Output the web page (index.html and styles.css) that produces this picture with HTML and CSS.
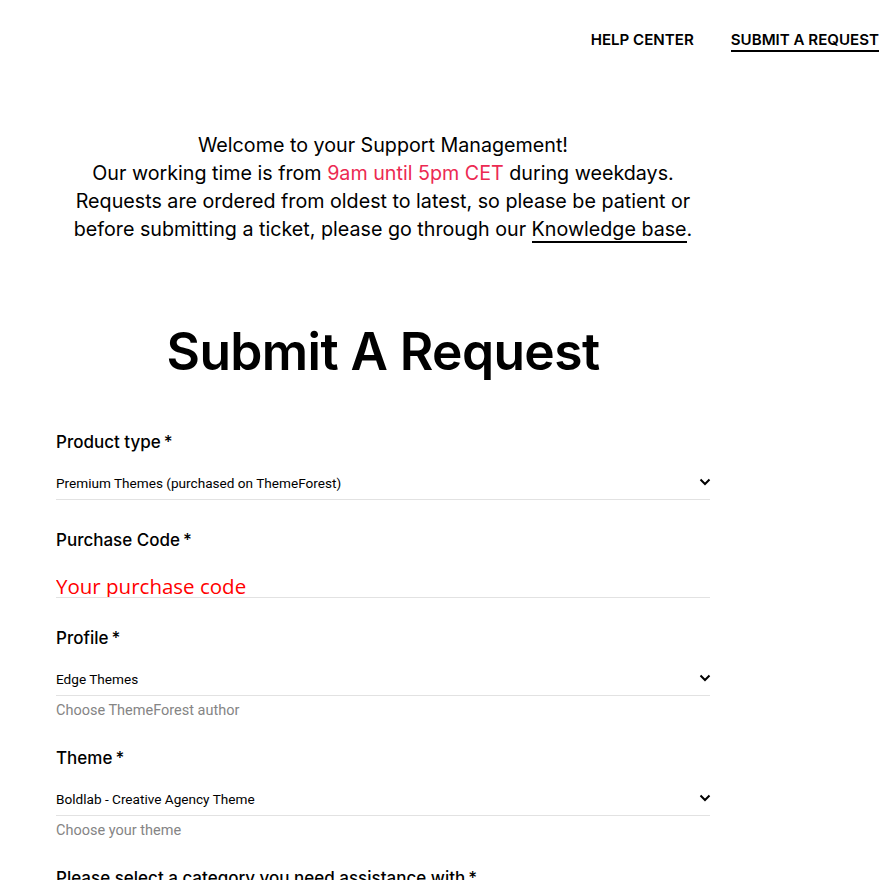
FILE: index.html
```html
<!DOCTYPE html>
<html>
    <head>
        <meta name="viewport" content="width=device-width">
        <title>Submit A Request</title>
        <link rel="stylesheet" href="styles.css">
    </head>
    <body>
        <div class="nav">
            <a class="nav-link" href="#">HELP CENTER</a>
            <a class="nav-link active" href="#">SUBMIT A REQUEST</a>
        </div>
        <div class="main">
            <div class="intro">
                Welcome to your Support Management!<br/>
                Our working time is from <span class="hours">9am until 5pm CET</span> during weekdays.<br/>
                Requests are ordered from oldest to latest, so please be patient or<br/>
                before submitting a ticket, please go through our <a class="kb" href="#">Knowledge base</a>.
            </div>
            <h1 class="title">Submit A Request</h1>
            <form class="form">
                <div class="field">
                    <label class="label">Product type<span class="req">*</span></label>
                    <div class="select">
                        <span>Premium Themes (purchased on ThemeForest)</span>
                        <svg class="chev" width="12" height="8" viewBox="0 0 12 8"><path d="M1.5 1.5 6 6l4.5-4.5" fill="none" stroke="#000" stroke-width="2"/></svg>
                    </div>
                </div>
                <div class="field">
                    <label class="label">Purchase Code<span class="req">*</span></label>
                    <input class="code" type="text" placeholder="Your purchase code">
                </div>
                <div class="field">
                    <label class="label">Profile<span class="req">*</span></label>
                    <div class="select">
                        <span>Edge Themes</span>
                        <svg class="chev" width="12" height="8" viewBox="0 0 12 8"><path d="M1.5 1.5 6 6l4.5-4.5" fill="none" stroke="#000" stroke-width="2"/></svg>
                    </div>
                    <div class="hint">Choose ThemeForest author</div>
                </div>
                <div class="field">
                    <label class="label">Theme<span class="req">*</span></label>
                    <div class="select">
                        <span>Boldlab - Creative Agency Theme</span>
                        <svg class="chev" width="12" height="8" viewBox="0 0 12 8"><path d="M1.5 1.5 6 6l4.5-4.5" fill="none" stroke="#000" stroke-width="2"/></svg>
                    </div>
                    <div class="hint">Choose your theme</div>
                </div>
                <div class="field">
                    <label class="label">Please select a category you need assistance with<span class="req">*</span></label>
                </div>
            </form>
        </div>
    </body>
</html>
```
FILE: styles.css
```css
body{
    margin:0;
    font-family:"Inter","Roboto",sans-serif;
    color:#000;
    background:#fff;
}
.nav{
    display:flex;
    justify-content:flex-end;
    gap:37px;
    height:80px;
    align-items:center;
    padding-right:3px;
}
.nav-link{
    color:#000;
    text-decoration:none;
    font-size:15.1px;
    font-weight:600;
    line-height:20px;
}
.nav-link.active{border-bottom:2px solid #000;padding-top:2px}

.main{margin-left:56px;width:654px}

.intro
{
    margin-top:51px;
    text-align:center;
    font-size:19.7px;
    line-height:28px;
    font-weight:400;
}
.hours{color:#ec2a52}
.kb{color:#000;text-decoration:none;border-bottom:2px solid #000}

.title
{
    margin:73px 0 0 0;
    text-align:center;
    font-size:51.5px;
    font-weight:600;
    line-height:70px;
    letter-spacing:-0.6px;
}

.form{margin-top:44px}
.field{margin-bottom:28px}
.label{display:block;font-size:17px;font-weight:500;line-height:24px;margin-bottom:13px}
.req{margin-left:3px}
.select{
    display:flex;
    justify-content:space-between;
    align-items:center;
    height:33px;
    border-bottom:1px solid #e2e2e2;
    font-family:"Roboto",sans-serif;
    font-size:13.6px;
    box-sizing:border-box;
}
.chev{margin-right:-1px;margin-top:-2px}
.code{
    display:block;
    width:100%;
    box-sizing:border-box;
    height:34px;
    border:none;
    border-bottom:1px solid #e2e2e2;
    outline:none;
    padding:10px 0 0 0;
    font-family:"Open Sans",sans-serif;
    font-size:20.5px;
    margin-top:-1px;
}
.code::placeholder{color:#ff0000}
.hint{
    font-family:"Roboto",sans-serif;
    font-size:14.5px;
    color:#858585;
    line-height:18px;
    margin-top:6px;
    margin-bottom:-2px;
}
```
